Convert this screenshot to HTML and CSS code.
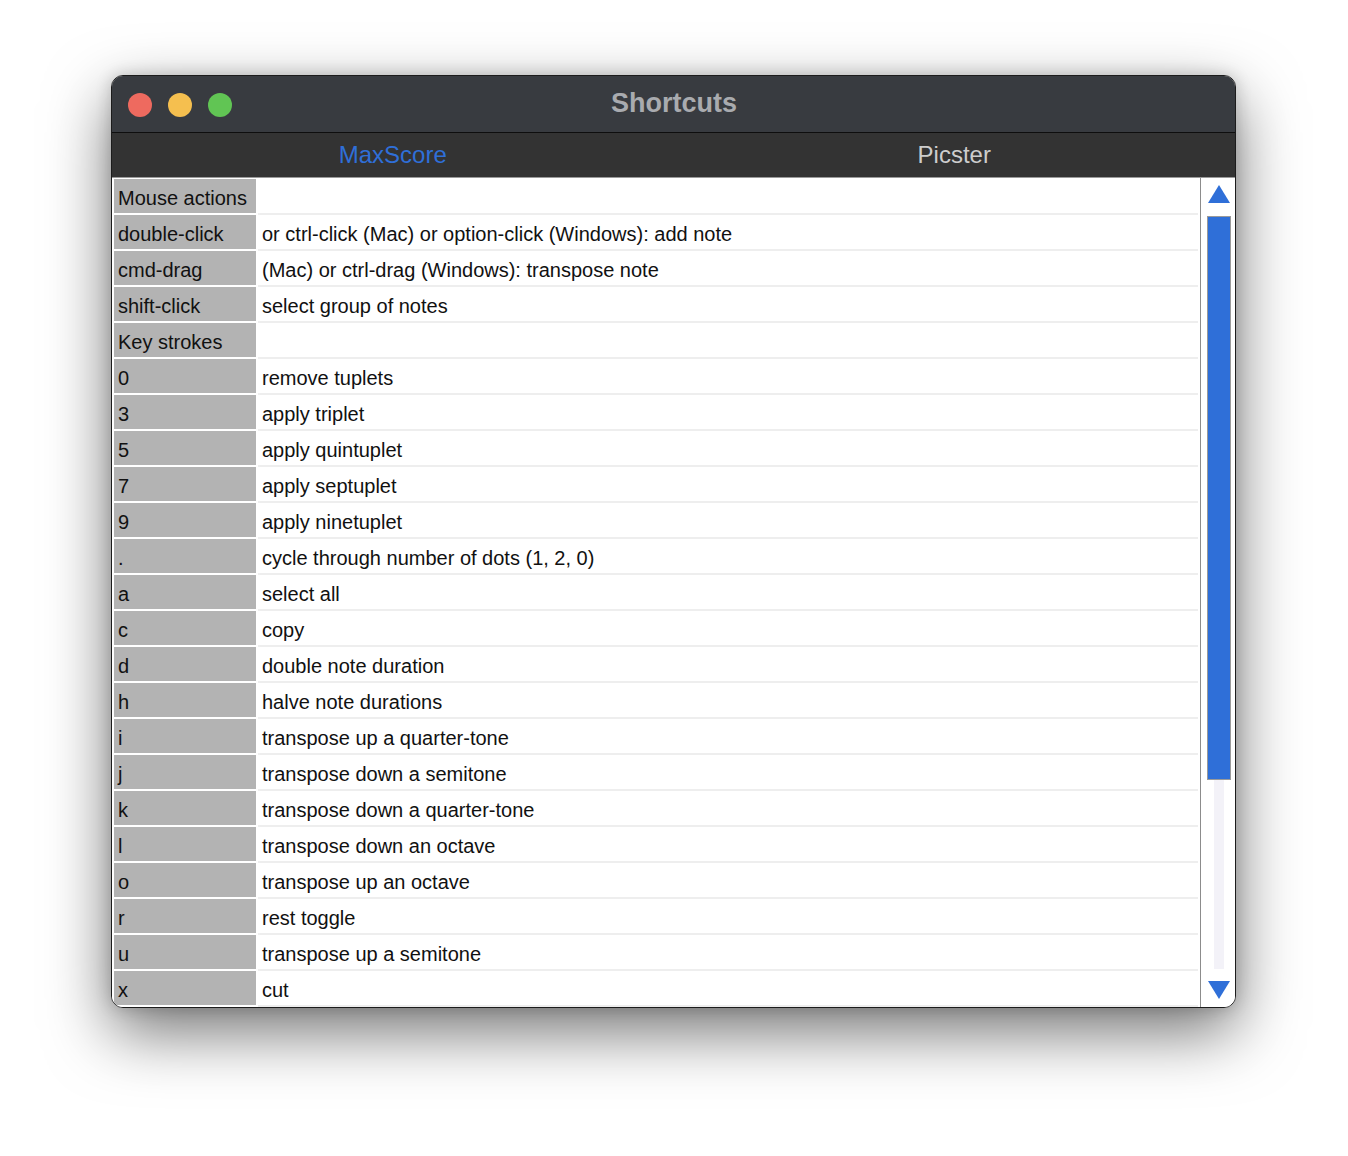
FILE: index.html
```html
<!DOCTYPE html>
<html>
<head>
<meta charset="utf-8">
<link rel="stylesheet" href="styles.css">
</head>
<body>
<div class="window">
  <div class="titlebar">
    <div class="lights">
      <span class="light red"></span>
      <span class="light yellow"></span>
      <span class="light green"></span>
    </div>
    <div class="title">Shortcuts</div>
  </div>
  <div class="tabs">
    <div class="tab active">MaxScore</div>
    <div class="tab">Picster</div>
  </div>
  <div class="content">
    <div class="rows">
      <div class="row"><div class="key">Mouse actions</div><div class="val"></div></div>
      <div class="row"><div class="key">double-click</div><div class="val">or ctrl-click (Mac) or option-click (Windows): add note</div></div>
      <div class="row"><div class="key">cmd-drag</div><div class="val">(Mac) or ctrl-drag (Windows): transpose note</div></div>
      <div class="row"><div class="key">shift-click</div><div class="val">select group of notes</div></div>
      <div class="row"><div class="key">Key strokes</div><div class="val"></div></div>
      <div class="row"><div class="key">0</div><div class="val">remove tuplets</div></div>
      <div class="row"><div class="key">3</div><div class="val">apply triplet</div></div>
      <div class="row"><div class="key">5</div><div class="val">apply quintuplet</div></div>
      <div class="row"><div class="key">7</div><div class="val">apply septuplet</div></div>
      <div class="row"><div class="key">9</div><div class="val">apply ninetuplet</div></div>
      <div class="row"><div class="key">.</div><div class="val">cycle through number of dots (1, 2, 0)</div></div>
      <div class="row"><div class="key">a</div><div class="val">select all</div></div>
      <div class="row"><div class="key">c</div><div class="val">copy</div></div>
      <div class="row"><div class="key">d</div><div class="val">double note duration</div></div>
      <div class="row"><div class="key">h</div><div class="val">halve note durations</div></div>
      <div class="row"><div class="key">i</div><div class="val">transpose up a quarter-tone</div></div>
      <div class="row"><div class="key">j</div><div class="val">transpose down a semitone</div></div>
      <div class="row"><div class="key">k</div><div class="val">transpose down a quarter-tone</div></div>
      <div class="row"><div class="key">l</div><div class="val">transpose down an octave</div></div>
      <div class="row"><div class="key">o</div><div class="val">transpose up an octave</div></div>
      <div class="row"><div class="key">r</div><div class="val">rest toggle</div></div>
      <div class="row"><div class="key">u</div><div class="val">transpose up a semitone</div></div>
      <div class="row"><div class="key">x</div><div class="val">cut</div></div>
    </div>
    <div class="scrollbar">
      <svg class="arrow up" width="22" height="18" viewBox="0 0 22 18"><polygon points="11,0 22,18 0,18" fill="#2f6fd8"/></svg>
      <div class="thumb"></div>
      <div class="track"></div>
      <svg class="arrow down" width="22" height="18" viewBox="0 0 22 18"><polygon points="0,0 22,0 11,18" fill="#2f6fd8"/></svg>
    </div>
  </div>
</div>
</body>
</html>
```

FILE: styles.css
```css
html, body {
  margin: 0;
  padding: 0;
  background: #ffffff;
}
body {
  box-sizing: border-box;
  min-height: 1156px;
  padding: 75px 0 0 111px;
  font-family: "Liberation Sans", Arial, sans-serif;
}
.window {
  width: 1123px;
  height: 931px;
  border: 1px solid #1c1c1c;
  border-radius: 12px;
  overflow: hidden;
  background: #ffffff;
  box-shadow: 0 24px 64px rgba(0, 0, 0, 0.55), 0 0 16px rgba(0, 0, 0, 0.18);
  display: flex;
  flex-direction: column;
}
.titlebar {
  height: 56px;
  flex: none;
  background: #383b40;
  border-bottom: 1px solid #0e0e0e;
  display: flex;
  align-items: center;
  position: relative;
}
.lights {
  display: flex;
  gap: 16px;
  padding-left: 16px;
  margin-top: 1px;
}
.light {
  width: 24px;
  height: 24px;
  border-radius: 50%;
  display: block;
}
.red { background: #ee6a5f; }
.yellow { background: #f5bf4f; }
.green { background: #61c554; }
.title {
  position: absolute;
  left: 0;
  right: 0;
  top: 0;
  bottom: 0;
  display: flex;
  align-items: center;
  justify-content: center;
  font-weight: bold;
  font-size: 27px;
  color: #a9abaf;
  padding-left: 1px;
  padding-bottom: 1px;
}
.tabs {
  height: 44px;
  flex: none;
  background: #333333;
  border-bottom: 1px solid #9a9a9a;
  display: flex;
}
.tab {
  flex: 1;
  display: flex;
  align-items: center;
  justify-content: center;
  font-size: 24px;
  color: #cdcdcd;
}
.tab.active {
  color: #2f6fd8;
}
.content {
  flex: 1;
  display: flex;
  min-height: 0;
  background: #ffffff;
}
.rows {
  width: 1086px;
  padding: 1px 0 0 2px;
  overflow: hidden;
  flex: none;
}
.row {
  display: flex;
  height: 36px;
}
.key {
  width: 138px;
  height: 34px;
  padding-left: 4px;
  background: #b3b3b3;
  color: #111111;
  font-size: 20px;
  line-height: 39px;
  margin-right: 2px;
  white-space: nowrap;
  overflow: hidden;
}
.val {
  width: 936px;
  height: 34px;
  padding-left: 4px;
  border-bottom: 2px solid #eeeeee;
  color: #111111;
  font-size: 20px;
  line-height: 39px;
  white-space: nowrap;
  overflow: hidden;
}
.scrollbar {
  flex: 1;
  border-left: 1px solid #8c8c8c;
  display: flex;
  flex-direction: column;
  align-items: center;
  padding-top: 7px;
  padding-left: 1px;
}
.arrow {
  display: block;
  flex: none;
}
.thumb {
  width: 22px;
  height: 562px;
  margin-top: 13px;
  background: #2f6fd8;
  border: 1px solid #9a9a9a;
  flex: none;
}
.track {
  width: 10px;
  height: 189px;
  background: #f3f2f8;
  flex: none;
  margin-bottom: 12px;
}
```
